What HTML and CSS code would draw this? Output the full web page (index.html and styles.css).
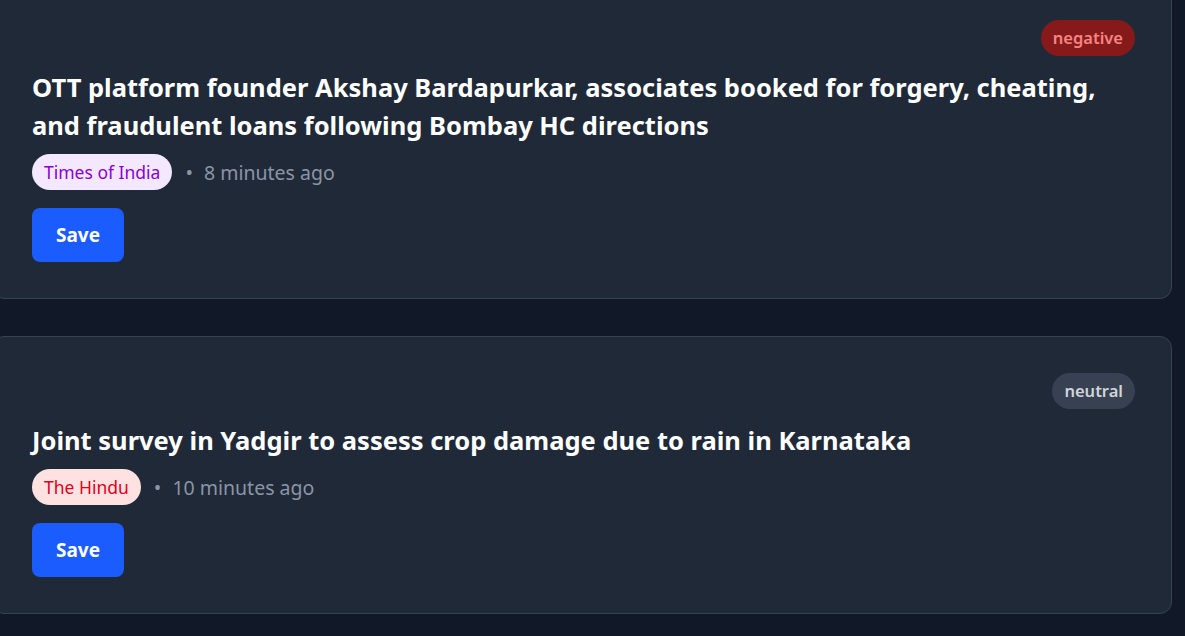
FILE: index.html
```html
<!DOCTYPE html>
<html lang="en">
<head>
<meta charset="utf-8">
<title>News feed</title>
<link rel="stylesheet" href="styles.css">
</head>
<body>
<main class="feed">
  <article class="card card-first">
    <div class="card-top">
      <span class="sentiment sentiment-negative">negative</span>
    </div>
    <h2 class="title">OTT platform founder Akshay Bardapurkar, associates booked for forgery, cheating, and fraudulent loans following Bombay HC directions</h2>
    <div class="meta">
      <span class="source source-toi">Times of India</span>
      <span class="dot">•</span>
      <span class="time">8 minutes ago</span>
    </div>
    <div class="actions"><button class="save">Save</button></div>
  </article>
  <article class="card">
    <div class="card-top">
      <span class="sentiment sentiment-neutral">neutral</span>
    </div>
    <h2 class="title">Joint survey in Yadgir to assess crop damage due to rain in Karnataka</h2>
    <div class="meta">
      <span class="source source-hindu">The Hindu</span>
      <span class="dot">•</span>
      <span class="time">10 minutes ago</span>
    </div>
    <div class="actions"><button class="save">Save</button></div>
  </article>
</main>
</body>
</html>
```
FILE: styles.css
```css
* { box-sizing: border-box; }
html, body {
  margin: 0;
  background: #111827;
  font-family: "Noto Sans", "Open Sans", sans-serif;
  overflow: hidden;
}
.feed {
  display: flex;
  flex-direction: column;
  gap: 37px;
  width: 1180px;
  margin-left: -8px;
  margin-top: -17px;
}
.card {
  background: #1f2937;
  border: 1px solid #374151;
  border-radius: 12px;
  padding: 36px 36px 36px 39px;
  display: flex;
  flex-direction: column;
}
.card-top {
  display: flex;
  justify-content: flex-end;
}
.sentiment {
  height: 36px;
  padding: 0 12px;
  border-radius: 18px;
  font-size: 16.5px;
  font-weight: 600;
  line-height: 36px;
}
.sentiment-negative { background: #861a1a; color: #f58585; }
.sentiment-neutral { background: #374151; color: #d1d5db; }
.title {
  margin: 12px 0 0;
  color: #ffffff;
  font-size: 25.5px;
  font-weight: 700;
  line-height: 38px;
}
.meta {
  display: flex;
  align-items: center;
  margin-top: 10px;
  height: 36px;
}
.source {
  height: 36px;
  line-height: 36px;
  padding: 0 12px;
  border-radius: 18px;
  font-size: 17.5px;
}
.source-toi { background: #f3e8ff; color: #8a00d4; }
.source-hindu { background: #fee2e2; color: #e0001b; }
.dot {
  color: #8b95a5;
  font-size: 20px;
  margin: 0 11px 0 13px;
}
.time {
  color: #8b95a5;
  font-size: 19.5px;
}
.actions { margin-top: 18px; }
.save {
  width: 92px;
  height: 54px;
  border: none;
  border-radius: 8px;
  background: #1a5cff;
  color: #ffffff;
  font-family: inherit;
  font-size: 19px;
  font-weight: 700;
  cursor: pointer;
}
```
